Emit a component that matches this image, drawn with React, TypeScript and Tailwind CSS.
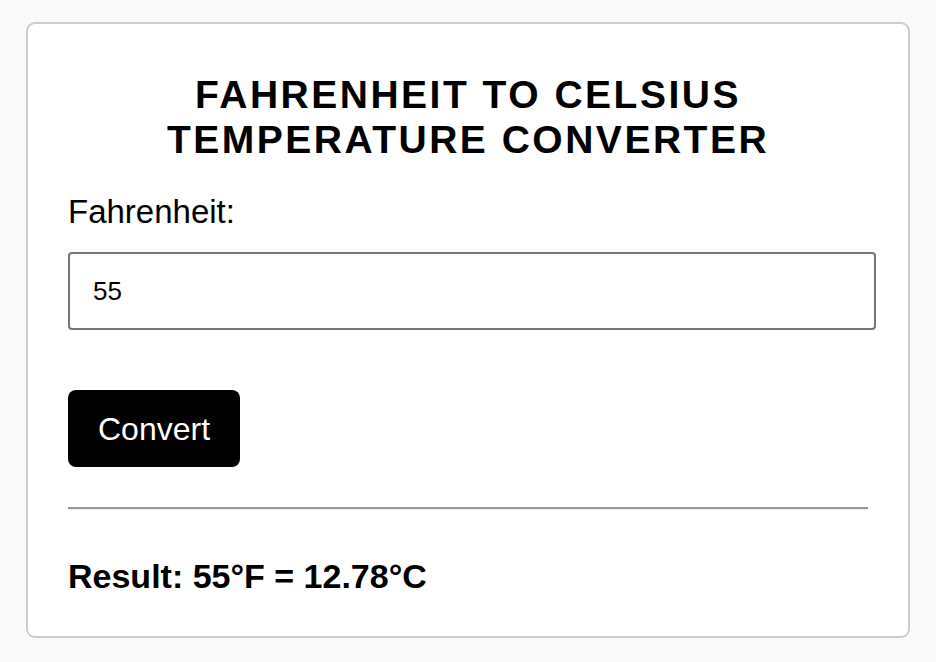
import React, { useState } from 'react';

export default function App() {
  const [fahrenheit, setFahrenheit] = useState('55');
  const [result, setResult] = useState('Result: 55°F = 12.78°C');

  const convert = () => {
    const f = parseFloat(fahrenheit);
    if (isNaN(f)) {
      setResult('Please enter a valid number');
      return;
    }
    const c = ((f - 32) * 5) / 9;
    setResult(`Result: ${f}°F = ${c.toFixed(2)}°C`);
  };

  return (
    <div
      className="min-h-[662px] bg-[#f9f9f9] pt-[22px]"
      style={{ fontFamily: '"Liberation Sans", Arial, sans-serif' }}
    >
      {/* Card */}
      <div className="mx-auto flex w-[884px] flex-col rounded-[9px] border-2 border-[#cccccc] bg-white px-[40px] pt-[48px] pb-[40px] text-black">
        <h1 className="text-center text-[39px] font-bold uppercase leading-[45px] tracking-[2.5px]">
          Fahrenheit to Celsius
          <br />
          Temperature Converter
        </h1>

        <label htmlFor="fahrenheit" className="mt-[30px] text-[33px] leading-[39px]">
          Fahrenheit:
        </label>
        <input
          id="fahrenheit"
          type="text"
          value={fahrenheit}
          onChange={(e) => setFahrenheit(e.target.value)}
          className="mt-[21px] h-[78px] w-[808px] rounded-[4px] border-2 border-[#767676] px-[23px] text-[26px] outline-none"
        />

        <div className="mt-[60px]">
          <button
            onClick={convert}
            className="h-[77px] w-[172px] rounded-[8px] bg-black text-[32px] text-white"
          >
            Convert
          </button>
        </div>

        <hr className="mt-[40px] border-t-2 border-t-[#999999] border-b border-b-[#eeeeee]" />

        <p className="mt-[47px] text-[34px] font-bold leading-[39px]">{result}</p>
      </div>
    </div>
  );
}
